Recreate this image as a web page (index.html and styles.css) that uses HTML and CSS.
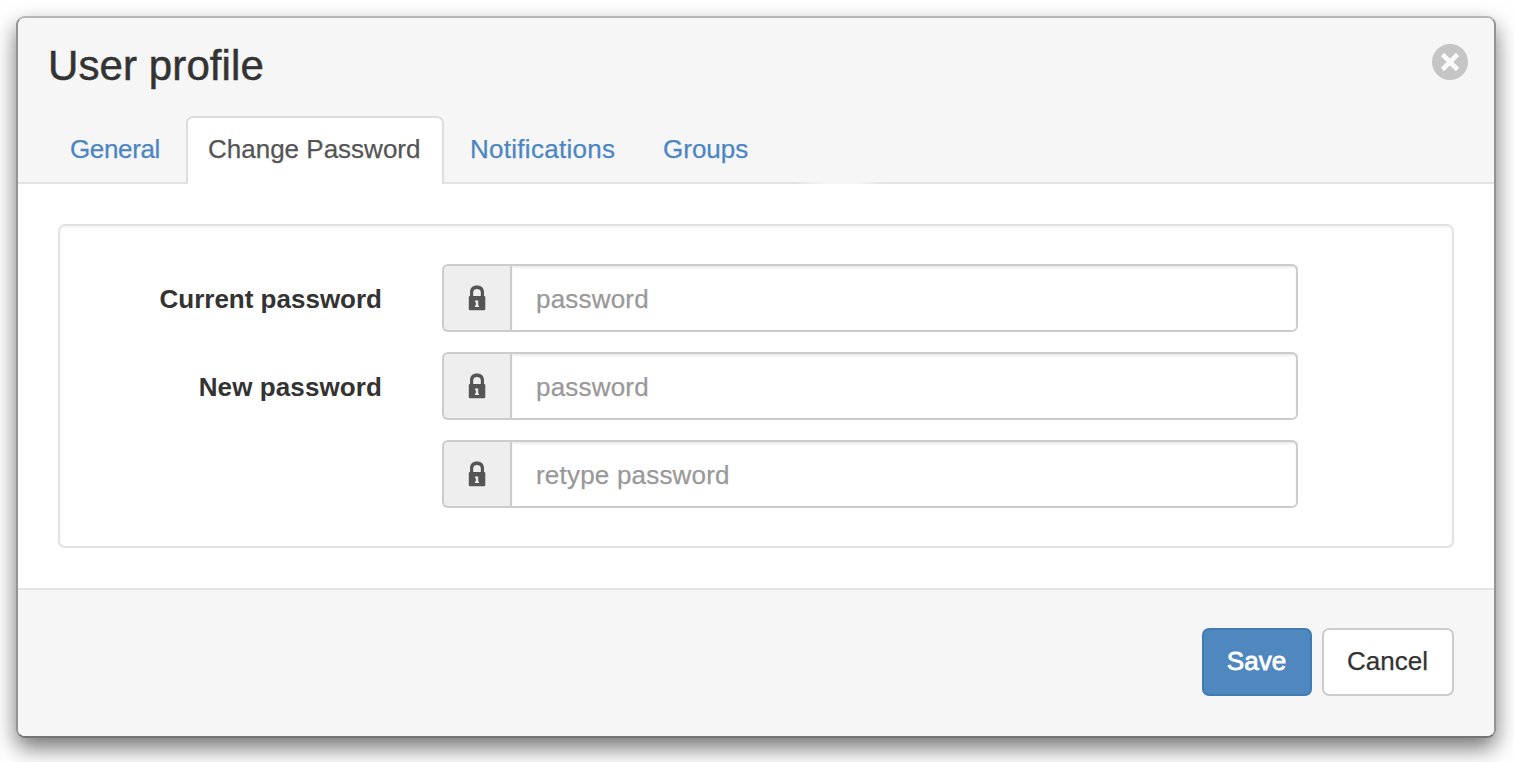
FILE: index.html
```html
<!DOCTYPE html>
<html lang="en">
<head>
<meta charset="utf-8">
<title>User profile</title>
<link rel="stylesheet" href="styles.css">
</head>
<body>
<svg class="defs" width="0" height="0" aria-hidden="true">
  <symbol id="lock" viewBox="0 0 18 26">
    <path fill-rule="evenodd" d="M2 11V7.500C2 3 4.500.5 9 .5s7 2.500 7 7V11Q17.300 11 17.300 12.200V24Q17.300 25.200 16 25.200H2Q.8 25.200.8 24V12.200Q.8 11 2 11zM5.200 11h7.600V7.500C12.800 5.200 11.500 4 9 4S5.200 5.200 5.200 7.500zM7 15.500v1.500h.8v3.500H7V22h4v-1.500h-.8v-5z"/>
  </symbol>
</svg>
<div class="modal">
  <header class="modal-header">
    <div class="title-row">
      <h1 class="title">User profile</h1>
      <button class="close" aria-label="Close">
        <svg width="36" height="36" viewBox="0 0 36 36"><circle cx="18" cy="18" r="18" fill="#c5c5c5"/><path d="M10.500 10.500l15 15M25.500 10.500l-15 15" stroke="#fafafa" stroke-width="4.600"/></svg>
      </button>
    </div>
    <nav class="tabs">
      <a class="tab tab-general">General</a>
      <a class="tab tab-active">Change Password</a>
      <a class="tab tab-notifications">Notifications</a>
      <a class="tab">Groups</a>
    </nav>
  </header>
  <main class="modal-body">
    <form class="well">
      <div class="row">
        <label class="label">Current password</label>
        <div class="group"><span class="addon"><svg class="lock"><use href="#lock"/></svg></span><input class="input" type="password" placeholder="password"></div>
      </div>
      <div class="row">
        <label class="label label-new">New password</label>
        <div class="group"><span class="addon"><svg class="lock"><use href="#lock"/></svg></span><input class="input" type="password" placeholder="password"></div>
      </div>
      <div class="row">
        <label class="label"></label>
        <div class="group"><span class="addon"><svg class="lock"><use href="#lock"/></svg></span><input class="input" type="password" placeholder="retype password"></div>
      </div>
    </form>
  </main>
  <footer class="modal-footer">
    <button class="btn btn-primary">Save</button>
    <button class="btn btn-default">Cancel</button>
  </footer>
</div>
</body>
</html>
```
FILE: styles.css
```css
* { box-sizing: border-box; }
body {
  margin: 0;
  padding: 16px 18px 24px 16px;
  height: 762px;
  overflow: hidden;
  background: #fff;
  color: #333;
  font: 26px/36px "Liberation Sans", Arial, sans-serif;
  -webkit-text-stroke: .25px currentColor;
}
.defs { position: absolute; }
.modal {
  display: flex;
  flex-direction: column;
  height: 722px;
  border: 2px solid;
  border-color: #b5b5b5 #949494 #747474;
  border-radius: 9px;
  background: #fff;
  box-shadow: 0 10px 22px rgba(0, 0, 0, .55);
}
.modal-header {
  position: relative;
  height: 166px;
  background: #f6f6f6;
  border-bottom: 2px solid #e2e2e2;
  border-radius: 7px 7px 0 0;
}
/* soft break in the divider line */
.modal-header::after {
  content: "";
  position: absolute;
  left: 776px;
  bottom: -2px;
  width: 94px;
  height: 2px;
  background: linear-gradient(90deg, transparent, #f6f6f6 35%, #f6f6f6 65%, transparent);
}
.title-row {
  display: flex;
  justify-content: space-between;
  height: 98px;
  padding: 26px 26px 0 30px;
}
.title {
  margin: 0;
  font-size: 42px;
  font-weight: 400;
  line-height: 44px;
  letter-spacing: .1px;
  -webkit-text-stroke: .5px currentColor;
}
.close {
  width: 36px;
  height: 36px;
  padding: 0;
  border: 0;
  background: none;
}
.close svg { display: block; }
.tabs {
  display: flex;
  gap: 4px;
  height: 68px;
  padding-left: 30px;
}
.tab {
  padding: 13px 20px 0;
  border: 2px solid transparent;
  border-bottom: 0;
  border-radius: 7px 7px 0 0;
  color: #4b86c3;
}
.tab-general { width: 134px; letter-spacing: -.35px; }
.tab-active {
  width: 258px;
  background: #fff;
  border-color: #ddd;
  color: #555;
}
.tab-notifications { width: 189px; letter-spacing: .28px; }
.modal-body {
  height: 404px;
  padding: 40px;
}
.well {
  display: flex;
  flex-direction: column;
  gap: 20px;
  height: 324px;
  padding: 38px 154px 38px 0;
  border: 2px solid #e2e2e2;
  border-radius: 7px;
  box-shadow: inset 0 2px 2px rgba(0, 0, 0, .04);
}
.row {
  display: flex;
  gap: 60px;
  height: 68px;
}
.label {
  width: 322px;
  padding-top: 17px;
  font-weight: 700;
  text-align: right;
  -webkit-text-stroke: 0;
}
.label-new { letter-spacing: .1px; }
.group { display: flex; flex: 1; }
.addon {
  display: flex;
  align-items: center;
  justify-content: center;
  width: 68px;
  border: 2px solid #ccc;
  border-right: 0;
  border-radius: 6px 0 0 6px;
  background: #eee;
  color: #555;
}
.lock { width: 18px; height: 26px; fill: currentColor; }
.input {
  flex: 1;
  min-width: 0;
  padding: 2px 24px 0;
  border: 2px solid #ccc;
  border-radius: 0 6px 6px 0;
  outline: 0;
  background: #fff;
  box-shadow: inset 0 2px 2px rgba(0, 0, 0, .075);
  font: inherit;
  letter-spacing: .2px;
}
.input::placeholder { color: #999; opacity: 1; -webkit-text-stroke: .25px #999; }
.modal-footer {
  display: flex;
  flex: 1;
  justify-content: flex-end;
  gap: 10px;
  padding: 38px 40px;
  background: #f6f6f6;
  border-top: 2px solid #e5e5e5;
  border-radius: 0 0 7px 7px;
}
.btn {
  height: 68px;
  padding: 0 1px 2px 0;
  border: 2px solid #ccc;
  border-radius: 7px;
  background: #fff;
  color: #333;
  font: inherit;
}
.btn-primary {
  width: 110px;
  background: #4f88bf;
  border-color: #407bb5;
  color: #fff;
  -webkit-text-stroke: .8px #fff;
}
.btn-default { width: 132px; }
```
